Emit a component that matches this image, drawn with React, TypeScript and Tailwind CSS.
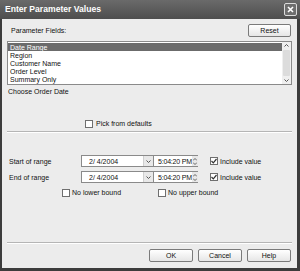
import React from "react";

const font = "font-['Liberation_Sans',Arial,sans-serif]";

const Check = ({ checked }: { checked?: boolean }) => (
  <div className="w-[8px] h-[8px] shrink-0 border border-[#6f6f6f] bg-white flex items-center justify-center">
    {checked && (
      <svg width="6" height="6" viewBox="0 0 6 6">
        <path d="M0.5 3 L2.3 4.8 L5.5 1" stroke="#333" strokeWidth="1.2" fill="none" />
      </svg>
    )}
  </div>
);

const Button = ({ label, className = "" }: { label: string; className?: string }) => (
  <div
    className={`h-[13px] border border-[#7a7a7a] rounded-[2px] bg-gradient-to-b from-white to-[#e6e6e6] flex items-center justify-center text-[7px] text-[#111] ${className}`}
  >
    {label}
  </div>
);

const DownArrow = () => (
  <svg width="5" height="3" viewBox="0 0 5 3">
    <path d="M0.5 0.5 L2.5 2.5 L4.5 0.5" stroke="#555" strokeWidth="1" fill="none" />
  </svg>
);

const RangeRow = ({ label }: { label: string }) => (
  <div className="flex items-center h-[12px]">
    <span className="w-[74px] pl-[2px]">{label}</span>
    <div className="w-[73px] h-[12px] border border-[#8a8a8a] bg-white flex items-center">
      <span className="flex-1 pl-[7px] whitespace-nowrap">2/ 4/2004</span>
      <div className="w-[10px] h-[10px] bg-[#e8e8e8] border-l border-[#cfcfcf] flex items-center justify-center">
        <DownArrow />
      </div>
    </div>
    <div className="w-[44px] h-[12px] border border-[#8a8a8a] border-l-0 bg-white flex items-center">
      <span className="flex-1 pl-[4px] whitespace-nowrap tracking-[-0.2px]">5:04:20 PM</span>
      <div className="w-[6px] h-[10px] shrink-0 bg-[#e8e8e8] flex flex-col items-center justify-center gap-[1px]">
        <svg width="4" height="3" viewBox="0 0 4 3">
          <path d="M0 2.5 L2 0.5 L4 2.5" stroke="#555" strokeWidth="0.9" fill="none" />
        </svg>
        <svg width="4" height="3" viewBox="0 0 4 3">
          <path d="M0 0.5 L2 2.5 L4 0.5" stroke="#555" strokeWidth="0.9" fill="none" />
        </svg>
      </div>
    </div>
    <div className="ml-[12px] flex items-center gap-[2px]">
      <Check checked />
      <span className="whitespace-nowrap">Include value</span>
    </div>
  </div>
);

const App = () => {
  const items = ["Date Range", "Region", "Customer Name", "Order Level", "Summary Only", "Sales Rep"];
  return (
    <div className={`w-[300px] h-[271px] bg-[#3c3c3c] flex flex-col overflow-hidden ${font} text-[7px] text-[#111] leading-none`}>
      <div className="h-[19px] shrink-0 bg-gradient-to-b from-[#6a6a6a] to-[#4e4e4e] flex items-center pl-[5px] pr-[3px]">
        <span className="flex-1 text-white font-bold text-[8.6px]">Enter Parameter Values</span>
        <div className="w-[13px] h-[13px] rounded-[2px] border border-[#dcdcdc] bg-[#6e6e6e] flex items-center justify-center">
          <svg width="7" height="7" viewBox="0 0 7 7">
            <path d="M1 1 L6 6 M6 1 L1 6" stroke="white" strokeWidth="1.6" />
          </svg>
        </div>
      </div>
      <div className="flex-1 ml-[2px] mr-[3px] mb-[3px] bg-[#ececec] flex flex-col px-[5px]">
        <div className="flex items-center mt-[5px] h-[13px]">
          <span className="flex-1 pl-[4px]">Parameter Fields:</span>
          <Button label="Reset" className="w-[43px] mr-[1px]" />
        </div>
        <div className="mt-[4px] h-[44px] border border-[#8a8a8a] bg-white flex">
          <div className="flex-1 flex flex-col pt-[1px] overflow-hidden">
            {items.map((it, i) => (
              <div
                key={it}
                className={`h-[8px] shrink-0 flex items-center pl-[2px] ${i === 0 ? "bg-[#6b6b6b] text-white" : ""}`}
              >
                {it}
              </div>
            ))}
          </div>
          <div className="w-[9px] bg-[#efefef] flex flex-col items-center justify-between py-[2px]">
            <svg width="5" height="3" viewBox="0 0 5 3">
              <path d="M0.5 2.5 L2.5 0.5 L4.5 2.5" stroke="#555" strokeWidth="1" fill="none" />
            </svg>
            <div className="w-[7px] flex-1 my-[3px] bg-[#dcdcdc] rounded-[1px]" />
            <DownArrow />
          </div>
        </div>
        <div className="mt-[2px] pl-[1px] h-[9px] leading-[9px]">Choose Order Date</div>
        <div className="mt-[23px] flex items-center pl-[78px] gap-[3px] h-[9px]">
          <Check />
          <span>Pick from defaults</span>
        </div>
        <div className="mt-[3px] h-[2px] border-t border-[#b5b5b5] border-b border-b-white" />
        <div className="mt-[22px] flex flex-col gap-[4px]">
          <RangeRow label="Start of range" />
          <RangeRow label="End of range" />
        </div>
        <div className="mt-[5px] flex items-center h-[9px]">
          <div className="w-[151px] shrink-0 flex items-center gap-[2px] pl-[55px]">
            <Check />
            <span className="whitespace-nowrap">No lower bound</span>
          </div>
          <div className="flex items-center gap-[2px]">
            <Check />
            <span className="whitespace-nowrap">No upper bound</span>
          </div>
        </div>
        <div className="flex-1" />
        <div className="h-[2px] border-t border-[#b5b5b5] border-b border-b-white" />
        <div className="mt-[5px] mb-[6px] flex justify-end gap-[5px] pr-[1px]">
          <Button label="OK" className="w-[44px]" />
          <Button label="Cancel" className="w-[44px]" />
          <Button label="Help" className="w-[44px]" />
        </div>
      </div>
    </div>
  );
};

export default App;
